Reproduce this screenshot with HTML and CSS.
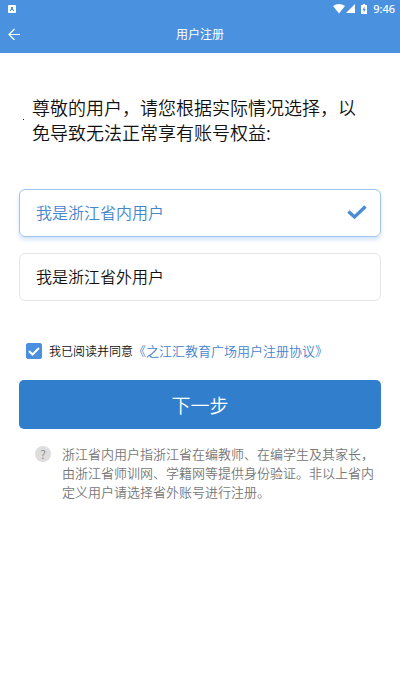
FILE: index.html
```html
<!DOCTYPE html>
<html lang="zh-CN">
<head>
    <meta charset="UTF-8">
    <meta name="viewport" content="width=device-width, initial-scale=1.0">
    <title>用户注册</title>
    <link rel="stylesheet" href="styles.css">
</head>
<body>
    <header class="header">
        <div class="status-bar">
            <svg class="status-app" width="8" height="8" viewBox="0 0 8 8">
                <rect width="8" height="8" rx="1" fill="#fff"/>
                <path d="M2 6V5L3 4V2h2v2l1 1v1H5V5H3v1z" fill="#4a90df"/>
            </svg>
            <div class="status-icons">
                <svg width="12" height="10" viewBox="0 0 12 10"><path d="M0 2Q6-2 12 2L6 9.500z" fill="#fff"/></svg>
                <svg width="9" height="10" viewBox="0 0 9 10"><path d="M9 0v9H0z" fill="#fff"/></svg>
                <svg class="battery" width="6" height="10" viewBox="0 0 6 10">
                    <path d="M0 1h2V0h2v1h2v9H0z" fill="#fff"/>
                    <path d="M3.500 2.500L1.500 6h1.200v2.500L4.700 5H3.500z" fill="#4a90df"/>
                </svg>
                <span class="time">9:46</span>
            </div>
        </div>
        <div class="nav">
            <button class="back" type="button" aria-label="返回">
                <svg width="12" height="12" viewBox="0 0 12 12"><path d="M12 6.500H1M6.500 1L1 6.500 6.500 12" fill="none" stroke="#fff" stroke-width="1.200"/></svg>
            </button>
            <h1 class="title">用户注册</h1>
        </div>
    </header>
    <main class="content">
        <ul class="intro">
            <li>尊敬的用户，请您根据实际情况选择，以免导致无法正常享有账号权益:</li>
        </ul>
        <form class="form">
            <div class="options">
                <label class="option">
                    <input class="option-input" type="radio" name="area" value="in" checked>
                    <span>我是浙江省内用户</span>
                    <svg class="check" width="20" height="16" viewBox="0 0 20 16"><path d="M1.500 7.500L7.500 13 18.500 2.500" fill="none" stroke="#4a8dd3" stroke-width="3.400"/></svg>
                </label>
                <label class="option">
                    <input class="option-input" type="radio" name="area" value="out">
                    <span>我是浙江省外用户</span>
                    <svg class="check" width="20" height="16" viewBox="0 0 20 16"><path d="M1.500 7.500L7.500 13 18.500 2.500" fill="none" stroke="#4a8dd3" stroke-width="3.400"/></svg>
                </label>
            </div>
            <div class="agreement">
                <span class="tick">
                    <input class="tick-input" type="checkbox" id="agree" checked>
                    <svg class="tick-mark" width="16" height="16" viewBox="0 0 16 16"><path d="M3 8l3.500 3.500L13 5" fill="none" stroke="#fff" stroke-width="2"/></svg>
                </span>
                <label for="agree">我已阅读并同意</label>
                <a class="agreement-link" href="#">《之江汇教育广场用户注册协议》</a>
            </div>
            <button class="next" type="button">下一步</button>
        </form>
        <div class="note">
            <span class="note-icon">?</span>
            <p class="note-text">浙江省内用户指浙江省在编教师、在编学生及其家长，由浙江省师训网、学籍网等提供身份验证。非以上省内定义用户请选择省外账号进行注册。</p>
        </div>
    </main>
</body>
</html>
```
FILE: styles.css
```css
* {
    box-sizing: border-box;
}
body {
    margin: 0;
    background-color: #fff;
    color: #111;
    font-family: "Noto Sans CJK SC", sans-serif;
    font-weight: 350;
}
svg {
    display: block;
}
.header {
    background-color: #4a91e0;
    color: #fff;
}
.status-bar {
    display: flex;
    align-items: center;
    justify-content: space-between;
    height: 18px;
    padding: 0 5px 0 8px;
}
.status-icons {
    display: flex;
    align-items: center;
    gap: 1px;
}
.battery {
    margin: 0 5px;
}
.time {
    font-family: "Noto Sans", sans-serif;
    font-size: 11px;
    font-weight: 500;
    line-height: 16px;
}
.nav {
    display: grid;
    grid-template-columns: 40px 1fr 40px;
    align-items: center;
    height: 35px;
    padding-bottom: 3px;
}
.back {
    padding: 8px;
    border: none;
    background: none;
    cursor: pointer;
}
.title {
    margin: 0;
    font-size: 12px;
    font-weight: 400;
    line-height: 16px;
    text-align: center;
}
.content {
    padding: 42px 19px;
}
.intro {
    margin: 0;
    padding: 0 13px;
    list-style: none;
    font-size: 18px;
    line-height: 25px;
}
.intro li {
    position: relative;
}
.intro li::before {
    content: "";
    position: absolute;
    top: 24px;
    left: -9px;
    width: 1px;
    height: 1px;
    background-color: #222;
}
.options {
    display: grid;
    gap: 16px;
    margin-top: 44px;
}
.option {
    display: flex;
    align-items: center;
    justify-content: space-between;
    height: 48px;
    padding: 0 13px 2px 16px;
    border: 1px solid #e6e6e6;
    border-radius: 6px;
    font-size: 16px;
    line-height: 24px;
    cursor: pointer;
}
.option:has(:checked) {
    border-color: #9cc4ec;
    box-shadow: 0 3px 4px #d5e5f9;
    color: #4585cc;
}
.option-input {
    position: absolute;
    opacity: 0;
}
.check {
    visibility: hidden;
}
.option-input:checked ~ .check {
    visibility: visible;
}
.agreement {
    display: flex;
    align-items: center;
    margin-top: 40px;
    padding-left: 7px;
    font-size: 12px;
    line-height: 20px;
}
.tick {
    position: relative;
    margin-right: 7px;
}
.tick-input {
    display: block;
    width: 16px;
    height: 16px;
    margin: 0;
    border: 1px solid #4a90df;
    border-radius: 2px;
    appearance: none;
}
.tick-input:checked {
    background-color: #4a90df;
}
.tick-mark {
    position: absolute;
    top: 0;
    left: 0;
    pointer-events: none;
}
.agreement-link {
    color: #4585cc;
    font-size: 13px;
    text-decoration: none;
}
.next {
    display: block;
    width: 100%;
    height: 49px;
    margin-top: 19px;
    border: none;
    border-radius: 5px;
    background-color: #317ecd;
    color: #fff;
    font-family: inherit;
    font-size: 19px;
    font-weight: 350;
    cursor: pointer;
}
.note {
    display: flex;
    gap: 11px;
    margin-top: 15px;
    padding-left: 16px;
    color: #777;
}
.note-icon {
    flex: none;
    width: 16px;
    height: 16px;
    margin-top: 2px;
    border-radius: 50%;
    background-color: #ddd;
    color: #888;
    font-size: 12px;
    line-height: 16px;
    text-align: center;
}
.note-text {
    margin: 0;
    font-size: 13px;
    line-height: 19px;
}
```
